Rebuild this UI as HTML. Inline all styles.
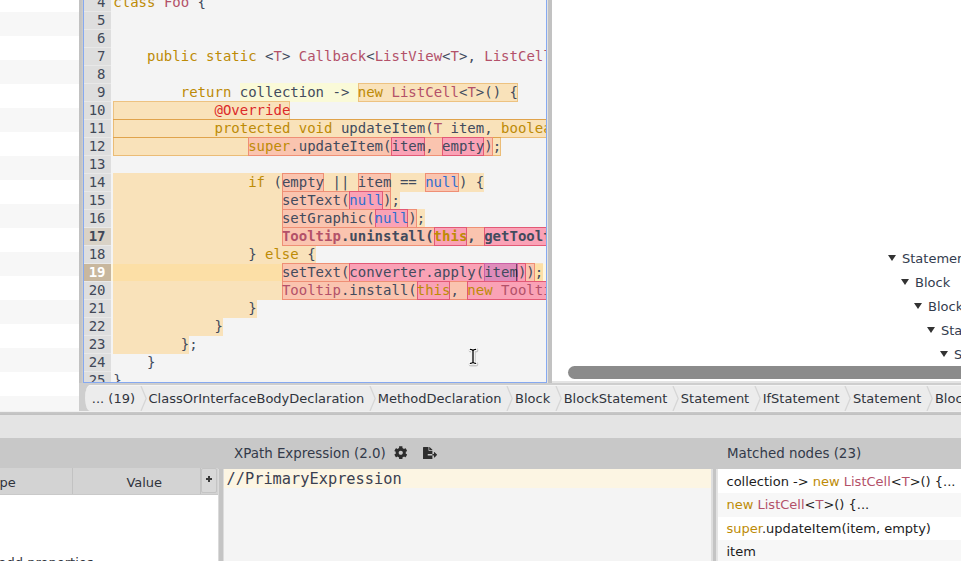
<!DOCTYPE html>
<html>
<head>
<meta charset="utf-8">
<title>Rule Designer</title>
<style>
html,body{margin:0;padding:0;}
body{width:961px;height:561px;overflow:hidden;position:relative;background:#e4e4e4;font-family:"DejaVu Sans","Liberation Sans",sans-serif;font-size:13px;color:#2e3440;}
.abs{position:absolute;}
#leftpanel{left:0;top:0;width:79px;height:411.5px;background:#fff;overflow:hidden;}
#leftpanel div{position:absolute;left:0;width:80px;height:24px;background:#f7f7f7;}
#lborder{left:79px;top:0;width:5px;height:411px;background:linear-gradient(to right,#c0c0c0,#c6c6c6 50%,#d4d4d4);}
#codewrap{left:83px;top:-1px;width:462px;height:381.5px;border:1px solid #86a9f0;background:#f4f4f4;overflow:hidden;}
#gutter{left:0;top:-7px;width:27px;background:#dedede;}
.g{height:17px;line-height:16px;border-top:1px solid #e8e8e8;font-family:"DejaVu Sans Mono","Liberation Mono",monospace;font-size:14px;text-align:right;padding-right:5.5px;color:#414857;width:21.5px;}
.gb{font-weight:bold;background:#d9d2c6;}
.gcur{font-weight:bold;background:#c8b79e;color:#fff;}
#code{left:27.3px;padding-left:2px;overflow:hidden;height:400px;top:-7px;width:433px;font-family:"DejaVu Sans Mono","Liberation Mono",monospace;font-size:14px;color:#424b5d;}
.ln{height:18px;line-height:18px;white-space:pre;}
.bl{position:relative;z-index:1;}
.bl .h3,.bl .h4{height:19.3px;}
.cur{background:linear-gradient(transparent 1px,#fdf6e0 1px);margin-left:-2px;padding-left:2px;}
.k{color:#bd8b06;}
.c{color:#b35169;}
.n{color:#2f6fd0;}
.a{color:#dc2a2a;}
.h{display:inline-block;height:18.7px;line-height:18px;vertical-align:top;box-sizing:border-box;}
.h1{background:#fafad8;}
.h2{background:#f9e2ba;}
.h2.bd{box-shadow:inset 0 0 0 1px rgba(222,150,50,.42);}
#code .ln:nth-child(8)>.h2.bd,#code .ln:nth-child(9)>.h2.bd{box-shadow:inset 0 0 0 1px rgba(222,150,50,.5),inset 0 1px 0 0 rgba(210,135,35,.55);}
.h3{background:#fac4af;box-shadow:inset 0 0 0 1px rgba(228,90,60,.5);}
.h4{background:#faa2b6;box-shadow:inset 0 0 0 1px rgba(212,40,75,.6);}
.h5{background:#df8cba;box-shadow:inset 0 0 0 1px rgba(185,60,150,.55);}
.cur .h2{background:linear-gradient(#f9e2ba 1px,#fcdfa6 1px);}
#rborder{left:547px;top:0;width:5px;height:386px;background:#c2c2c2;border-left:1.2px solid #e2e2e2;box-sizing:border-box;}
#rightpanel{left:552px;top:0;width:409px;height:381px;background:#fff;overflow:hidden;}
#hband{left:79px;top:382.5px;width:882px;height:28.5px;background:#cecece;}
#crumbbar{left:84.5px;top:385px;width:877px;height:25.5px;background:#ececec;border-top:1px solid #f4f4f4;box-sizing:border-box;border-radius:5px 0 0 5px / 13px 0 0 13px;overflow:hidden;white-space:nowrap;}
#sep1{left:0;top:410.6px;width:961px;height:5.3px;background:linear-gradient(#f0f0f0 0,#f0f0f0 0.9px,#c8c8c8 1.1px,#c2c2c2 3.4px,#b8b8b8 4.4px,#c4c4c4 5.3px);}
#band2{left:0;top:415px;width:961px;height:23px;background:#e4e4e4;}
#band3{left:0;top:438px;width:961px;height:30.7px;background:#c8c8c8;}
.tree{position:absolute;height:24px;line-height:25px;white-space:nowrap;color:#333c4e;}
.tree:before{content:"";position:absolute;left:-13.6px;top:9.2px;border-left:4.7px solid transparent;border-right:4.7px solid transparent;border-top:6.2px solid #333;}
#scroll{left:568px;top:366px;width:420px;height:12.5px;border-radius:6.5px;background:#8b8b8b;}

.crumb{position:absolute;top:0;height:25px;line-height:25px;margin-left:-1.2px;color:#30343c;white-space:nowrap;}
.chev{position:absolute;top:0;margin-left:-1.4px;}
#tblhead{left:0;top:467.7px;width:218px;height:27px;background:#d3d3d3;border-bottom:1px solid #c9c9c9;box-sizing:border-box;}
#tblhead .col{position:absolute;top:0;height:26.5px;line-height:30.4px;box-sizing:border-box;border-right:1px solid #c2c2c2;text-align:center;color:#30343c;}
#tblbody{left:0;top:494.6px;width:218px;height:67px;background:#fff;}
#plusbtn{position:absolute;left:201px;top:0.8px;width:16px;height:25px;box-sizing:border-box;border:1px solid #c4c4c4;border-radius:2px;background:#d8d8d8;}
#plusbtn:before{content:"";position:absolute;left:4.1px;top:8.9px;width:6.2px;height:2px;background:#3a3a3a;}
#plusbtn:after{content:"";position:absolute;left:6.2px;top:6.8px;width:2px;height:6.2px;background:#3a3a3a;}
#div1{left:218px;top:468.5px;width:6px;height:93px;background:#c4c4c4;border-left:1.5px solid #dadada;border-right:1px solid #dcdcdc;box-sizing:border-box;}
#xpath{left:224px;top:468.7px;width:486.6px;height:93px;background:#f4f4f4;font-family:"DejaVu Sans Mono","Liberation Mono",monospace;font-size:15.32px;color:#3a4050;}
#xpath .l1{height:19.8px;line-height:20.6px;background:#fcf5e3;padding-left:2.5px;white-space:pre;}
#div2{left:710.6px;top:468.5px;width:6.9px;height:93px;background:#c4c4c4;border-left:2.4px solid #dedede;border-right:1.2px solid #e2e2e2;box-sizing:border-box;}
#list{left:717.5px;top:468.7px;width:244px;height:93px;background:#fff;overflow:hidden;padding-top:1.4px;box-sizing:border-box;}
#list .r{height:23.4px;line-height:23.6px;padding-left:9px;white-space:nowrap;color:#1c1c1c;}
#list .r:nth-child(even){background:#f7f7f7;}
.title{position:absolute;height:30px;line-height:31.6px;font-size:13.42px;white-space:nowrap;color:#333a4a;}
.ico{position:absolute;}
</style>
</head>
<body>
<div id="leftpanel" class="abs">
<div style="top:12px"></div><div style="top:60px"></div><div style="top:108px"></div><div style="top:156px"></div><div style="top:204px"></div><div style="top:252px"></div><div style="top:300px"></div><div style="top:348px"></div><div style="top:396px"></div>
</div>
<div id="lborder" class="abs"></div>
<div id="rborder" class="abs"></div>
<div id="codewrap" class="abs">
<div id="gutter" class="abs">
<div class="g">4</div>
<div class="g">5</div>
<div class="g">6</div>
<div class="g">7</div>
<div class="g">8</div>
<div class="g">9</div>
<div class="g">10</div>
<div class="g">11</div>
<div class="g">12</div>
<div class="g">13</div>
<div class="g">14</div>
<div class="g">15</div>
<div class="g">16</div>
<div class="g gb">17</div>
<div class="g">18</div>
<div class="g gcur">19</div>
<div class="g">20</div>
<div class="g">21</div>
<div class="g">22</div>
<div class="g">23</div>
<div class="g">24</div>
<div class="g">25</div>
</div>
<div id="code" class="abs">
<div class="ln"><span class="k">class</span> <span class="c">Foo</span> {</div><div class="ln"></div><div class="ln"></div><div class="ln">    <span class="k">public</span> <span class="k">static</span> &lt;<span class="c">T</span>&gt; <span class="c">Callback</span>&lt;<span class="c">ListView</span>&lt;<span class="c">T</span>&gt;, <span class="c">ListCell</span>&lt;<span class="c">T</span>&gt;&gt; forListView(<span class="c">Function</span>&lt;<span class="c">T</span>, <span class="c">String</span>&gt; converter) {</div><div class="ln"></div><div class="ln">        <span class="k">return</span> <span class="h h1">collection -&gt; <span class="h h2 bd"><span class="k">new</span> <span class="c">ListCell</span>&lt;<span class="c">T</span>&gt;() {</span></span></div><div class="ln"><span class="h h2 bd">            <span class="a">@Override</span></span></div><div class="ln"><span class="h h2 bd">            <span class="k">protected</span> <span class="k">void</span> updateItem(<span class="c">T</span> item, <span class="k">boolean</span> empty) {</span></div><div class="ln"><span class="h h2 bd">                <span class="h h3"><span class="k">super</span>.updateItem(<span class="h h4">item</span>, <span class="h h4">empty</span>)</span>;</span></div><div class="ln"></div><div class="ln"><span class="h h2">                <span class="k">if</span> (<span class="h h3">empty</span> || <span class="h h3">item</span> == <span class="h h3"><span class="n">null</span></span>) {</span></div><div class="ln"><span class="h h2">                    <span class="h h3">setText(<span class="h h4"><span class="n">null</span></span>)</span>;</span></div><div class="ln"><span class="h h2">                    <span class="h h3">setGraphic(<span class="h h4"><span class="n">null</span></span>)</span>;</span></div><div class="ln bl"><span class="h h2">                    <span class="h h3"><b><span class="c">Tooltip</span>.uninstall(<span class="h h4"><span class="k">this</span></span>, <span class="h h4">getTooltip()</span>)</b></span><b>;</b></span></div><div class="ln"><span class="h h2">                } <span class="k">else</span> {</span></div><div class="ln cur"><span class="h h2">                    <span class="h h3">setText(<span class="h h4">converter.apply(<span class="h h5">item</span>)</span>)</span>;</span></div><div class="ln"><span class="h h2">                    <span class="h h3"><span class="c">Tooltip</span>.install(<span class="h h4"><span class="k">this</span></span>, <span class="h h4"><span class="k">new</span> <span class="c">Tooltip</span>(converter.apply(item))</span>)</span>;</span></div><div class="ln"><span class="h h2">                }</span></div><div class="ln"><span class="h h2">            }</span></div><div class="ln"><span class="h h2">        }</span>;</div><div class="ln">    }</div><div class="ln">}</div>
<div style="position:absolute;left:404.4px;top:270.5px;width:1px;height:17px;background:rgba(0,0,0,.5)"></div>
</div>
</div>
<div id="rightpanel" class="abs">
<div class="tree" style="left:350px;top:246px">Statement</div>
<div class="tree" style="left:363px;top:270px">Block</div>
<div class="tree" style="left:376px;top:294px">BlockStatement</div>
<div class="tree" style="left:389px;top:318px">Statement</div>
<div class="tree" style="left:402px;top:342px">StatementExpression</div>
</div>
<div id="scroll" class="abs"></div>
<svg class="abs" style="left:466.95px;top:346.3px" width="12" height="22" viewBox="0 0 12 22"><g fill="none" stroke-linecap="round" stroke-linejoin="round"><path d="M3.4 3.4 Q5.4 3.4 6 4.6 Q6.6 3.4 8.6 3.4 M6 4.6 V16.4 M3.4 17.4 Q5.4 17.4 6 16.3 Q6.6 17.4 8.6 17.4" stroke="#000" stroke-opacity=".18" stroke-width="4.6" transform="translate(.5,.8)"/><path d="M3.4 3.4 Q5.4 3.4 6 4.6 Q6.6 3.4 8.6 3.4 M6 4.6 V16.4 M3.4 17.4 Q5.4 17.4 6 16.3 Q6.6 17.4 8.6 17.4" stroke="#fff" stroke-width="3.4"/><path d="M3.4 3.4 Q5.4 3.4 6 4.6 Q6.6 3.4 8.6 3.4 M6 4.6 V16.4 M3.4 17.4 Q5.4 17.4 6 16.3 Q6.6 17.4 8.6 17.4" stroke="#000" stroke-width="1.3"/></g></svg>
<div id="hband" class="abs"></div>
<div id="crumbbar" class="abs"><div class="crumb" style="left:8.5px">... (19)</div><svg class="chev" style="left:56.5px" width="8" height="25" viewBox="0 0 8 25"><polyline points="1,0 6.2,12.5 1,25" fill="none" stroke="#d6d6d6" stroke-width="1.3"/></svg><div class="crumb" style="left:65.2px">ClassOrInterfaceBodyDeclaration</div><svg class="chev" style="left:285.8px" width="8" height="25" viewBox="0 0 8 25"><polyline points="1,0 6.2,12.5 1,25" fill="none" stroke="#d6d6d6" stroke-width="1.3"/></svg><div class="crumb" style="left:294.5px">MethodDeclaration</div><svg class="chev" style="left:423.0px" width="8" height="25" viewBox="0 0 8 25"><polyline points="1,0 6.2,12.5 1,25" fill="none" stroke="#d6d6d6" stroke-width="1.3"/></svg><div class="crumb" style="left:431.7px">Block</div><svg class="chev" style="left:471.7px" width="8" height="25" viewBox="0 0 8 25"><polyline points="1,0 6.2,12.5 1,25" fill="none" stroke="#d6d6d6" stroke-width="1.3"/></svg><div class="crumb" style="left:480.4px">BlockStatement</div><svg class="chev" style="left:588.8px" width="8" height="25" viewBox="0 0 8 25"><polyline points="1,0 6.2,12.5 1,25" fill="none" stroke="#d6d6d6" stroke-width="1.3"/></svg><div class="crumb" style="left:597.5px">Statement</div><svg class="chev" style="left:670.7px" width="8" height="25" viewBox="0 0 8 25"><polyline points="1,0 6.2,12.5 1,25" fill="none" stroke="#d6d6d6" stroke-width="1.3"/></svg><div class="crumb" style="left:679.4px">IfStatement</div><svg class="chev" style="left:761.0px" width="8" height="25" viewBox="0 0 8 25"><polyline points="1,0 6.2,12.5 1,25" fill="none" stroke="#d6d6d6" stroke-width="1.3"/></svg><div class="crumb" style="left:769.7px">Statement</div><svg class="chev" style="left:842.9px" width="8" height="25" viewBox="0 0 8 25"><polyline points="1,0 6.2,12.5 1,25" fill="none" stroke="#d6d6d6" stroke-width="1.3"/></svg><div class="crumb" style="left:851.6px">Block</div><svg class="chev" style="left:891.6px" width="8" height="25" viewBox="0 0 8 25"><polyline points="1,0 6.2,12.5 1,25" fill="none" stroke="#d6d6d6" stroke-width="1.3"/></svg><div class="crumb" style="left:900.3px">BlockStatement</div><svg class="chev" style="left:1008.7px" width="8" height="25" viewBox="0 0 8 25"><polyline points="1,0 6.2,12.5 1,25" fill="none" stroke="#d6d6d6" stroke-width="1.3"/></svg></div>
<div id="sep1" class="abs"></div>
<div id="band2" class="abs"></div>
<div id="band3" class="abs"></div>
<div class="title" style="left:234px;top:438px">XPath Expression (2.0)</div>
<svg class="ico" style="left:394.2px;top:445.9px" width="13.5" height="13.5" viewBox="0 0 512 512"><path fill="#2d2d2d" d="M487.4 315.7l-42.600-24.600c4.300-23.200 4.300-47 0-70.200l42.600-24.600c4.900-2.800 7.100-8.600 5.500-14-11.100-35.600-30-67.800-54.700-94.600-3.800-4.100-10-5.100-14.800-2.300L380.800 110c-17.900-15.400-38.500-27.300-60.800-35.100V25.800c0-5.600-3.900-10.500-9.400-11.700-36.700-8.200-74.300-7.800-109.200 0-5.500 1.200-9.400 6.100-9.400 11.700V75c-22.200 7.900-42.800 19.800-60.800 35.100L88.700 85.500c-4.900-2.800-11-1.900-14.800 2.300-24.700 26.700-43.600 58.900-54.700 94.600-1.700 5.400.6 11.200 5.500 14L67.300 221c-4.300 23.200-4.300 47 0 70.200l-42.600 24.600c-4.900 2.800-7.100 8.600-5.500 14 11.100 35.600 30 67.800 54.700 94.600 3.800 4.100 10 5.100 14.800 2.300l42.600-24.600c17.900 15.400 38.500 27.300 60.800 35.100v49.200c0 5.600 3.900 10.500 9.400 11.700 36.700 8.200 74.300 7.800 109.200 0 5.500-1.200 9.400-6.100 9.400-11.700v-49.200c22.200-7.900 42.800-19.800 60.800-35.100l42.600 24.600c4.900 2.800 11 1.900 14.800-2.300 24.700-26.700 43.600-58.900 54.700-94.600 1.500-5.500-.7-11.300-5.600-14.100zM256 336c-44.100 0-80-35.900-80-80s35.900-80 80-80 80 35.900 80 80-35.900 80-80 80z"/></svg>
<svg class="ico" style="left:423px;top:446.5px" width="14.1" height="12.5" viewBox="0 0 576 512"><path fill="#2d2d2d" d="M384 121.900c0-6.300-2.500-12.400-7-16.900L279.100 7c-4.500-4.500-10.600-7-17-7H256v128h128zM571 308l-95.700-96.400c-10.100-10.100-27.400-3-27.400 11.300V288h-64v64h64v65.200c0 14.300 17.300 21.400 27.400 11.300L571 332c6.600-6.600 6.600-17.400 0-24zm-379 28v-32c0-8.800 7.200-16 16-16h176V160H248c-13.200 0-24-10.800-24-24V0H24C10.700 0 0 10.700 0 24v464c0 13.300 10.700 24 24 24h336c13.300 0 24-10.700 24-24V352H208c-8.800 0-16-7.200-16-16z"/></svg>
<div class="title" style="left:727px;top:438px">Matched nodes (23)</div>
<div id="tblhead" class="abs">
<div class="col" style="left:-40px;width:113px;text-align:left;padding-left:26px">Type</div>
<div class="col" style="left:73px;width:128px;padding-left:15.5px">Value</div>
<div id="plusbtn"></div>
</div>
<div id="tblbody" class="abs"><div style="position:absolute;left:-90.7px;top:60px;white-space:nowrap;color:#30343c">Right-click to add properties</div></div>
<div id="div1" class="abs"></div>
<div id="xpath" class="abs"><div class="l1">//PrimaryExpression</div></div>
<div id="div2" class="abs"></div>
<div id="list" class="abs">
<div class="r">collection -&gt; <span class="k">new</span> <span class="c">ListCell</span>&lt;<span class="c">T</span>&gt;() {...</div>
<div class="r"><span class="k">new</span> <span class="c">ListCell</span>&lt;<span class="c">T</span>&gt;() {...</div>
<div class="r"><span class="k">super</span>.updateItem(item, empty)</div>
<div class="r">item</div>
</div>

</body>
</html>
